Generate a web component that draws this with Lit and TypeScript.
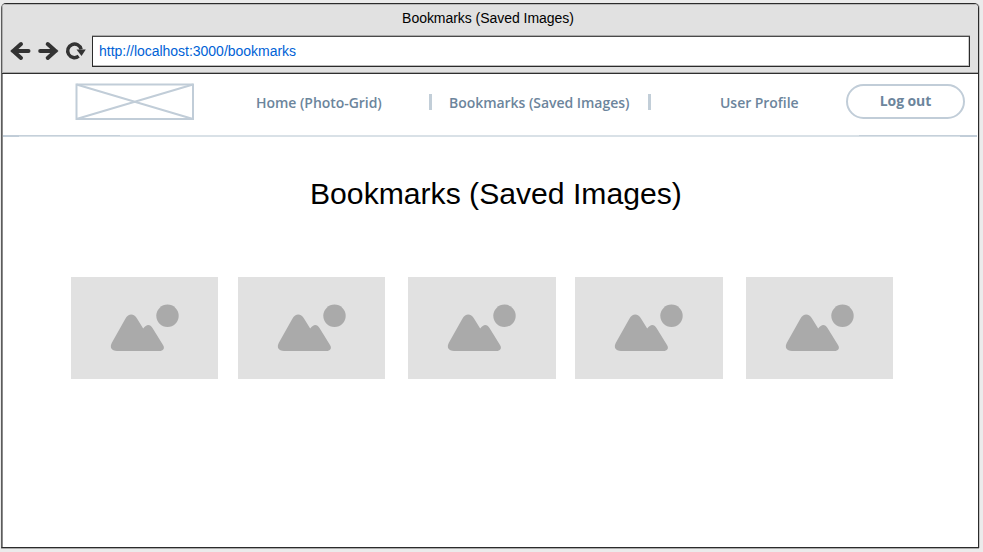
import { LitElement, html, css, svg } from "lit";
import { customElement } from "lit/decorators.js";

@customElement("photo-tile")
class PhotoTile extends LitElement {
  static styles = css`
    :host { display: block; width: 147.4px; height: 102px; background: #e1e1e1; }
    svg { display: block; }
  `;
  render() {
    return html`<svg width="147" height="102" viewBox="0 0 147 102" fill="#aaa">
      <circle cx="96.500" cy="38.800" r="11.200" />
      <path d="M46 74C40.500 74 38.300 70 41 65.500L54.500 41.500C57.500 36.300 63 36.300 66 41.500L72.200 51.500C75.500 46.800 79 46.800 81.500 51L92 68C94.300 71.500 92 74 88.500 74Z" />
    </svg>`;
  }
}

@customElement("app-root")
class AppRoot extends LitElement {
  static styles = css`
    :host { display: block; box-sizing: border-box; height: 552px; padding: 3px 4px 4px 1px; background: #ebebeb; font-family: "Liberation Sans", Arial, sans-serif; overflow: hidden; }
    * { box-sizing: border-box; }
    .window { height: 545px; border: 1px solid #2b2b2b; border-left-color: #5c5c5c; border-radius: 5px 5px 0 0; background: #fff; overflow: hidden; box-shadow: 0 1px 0 #aaa, 1px 0 0 #c4c4c4, inset 1px 0 0 #8c8c8c; }
    .chrome { height: 70px; background: #e1e1e1; border-bottom: 1px solid #2f2f2f; box-shadow: inset 0 1px 0 #b9b9b9, inset 1px 0 0 #b0b0b0, inset 0 -1px 0 #a8a8a8; }
    .title { height: 32px; padding-top: 6px; padding-right: 4px; font-size: 14px; line-height: 17px; letter-spacing: -0.04px; text-align: center; color: #000; }
    .bar { display: flex; height: 31px; padding-right: 8px; }
    .tools { width: 90px; flex: none; display: block; }
    .url { flex: 1; height: 31px; border: 1px solid #2b2b2b; border-top-color: #4a4a4a; background: #fff; box-shadow: inset 0 -1px 0 #bbb, inset -1px 0 0 #ccc, 0 -1px 0 #aaa; padding: 6px 0 0 6px; font-size: 14px; line-height: 17px; letter-spacing: -0.02px; color: #0062d6; }
    .nav { display: flex; height: 60px; color: #6c859c; font: 600 14px/20px "Open Sans", sans-serif; letter-spacing: -0.04px; }
    .logo { margin: 9px 0 0 73px; flex: none; display: block; }
    .link { margin-top: 19px; white-space: nowrap; flex: none; }
    .home { width: 173px; margin-left: 62px; }
    .saved { width: 200px; margin-left: 17px; }
    .profile { width: 126px; margin-left: 69px; }
    .sep { width: 3px; height: 16px; margin-top: 20px; background: #c2ced8; flex: none; }
    .saved + .sep { margin-left: -1px; }
    .logout { width: 119px; height: 35px; margin-top: 10px; flex: none; border: 2px solid #c1cdd8; border-radius: 18px; padding-top: 5px; text-align: center; font-weight: 700; letter-spacing: -0.1px; }
    .rule { display: block; }
    h1 { margin: 39px 0 0 308px; font-weight: 400; font-size: 30.150px; line-height: 36px; color: #000; white-space: nowrap; }
    .grid { display: grid; grid-template-columns: 167px 170.300px 167px 170.700px 147px; margin: 65px 0 0 69px; }
  `;
  render() {
    const arrow = svg`<path d="M3.500 9.500H19M11.500 2.500L3.700 9.500L11.500 16.500" fill="none" stroke="#333" stroke-width="4" stroke-linecap="round" stroke-linejoin="miter" />`;
    return html`<div class="window">
      <div class="chrome">
        <div class="title">Bookmarks (Saved Images)</div>
        <div class="bar">
          <svg class="tools" width="90" height="31" viewBox="2 36 90 31">
            <g transform="translate(9.500 41.500)">${arrow}</g>
            <g transform="translate(59.200 41.500) scale(-1 1)">${arrow}</g>
            <path d="M78.700 56.200A6.800 6.800 0 1 1 81.100 49.300" fill="none" stroke="#333" stroke-width="3.400" />
            <path d="M76.500 49.500H85.800L81.500 56Z" fill="#333" />
          </svg>
          <div class="url">http://localhost:3000/bookmarks</div>
        </div>
      </div>
      <nav class="nav">
        <svg class="logo" width="119" height="38" viewBox="0 0 119 38" fill="none" stroke="#c1cdd8" stroke-width="2">
          <rect x="1.500" y="1.500" width="116.500" height="34.500" />
          <path d="M1.500 1.500L118 36M118 1.500L1.500 36" />
        </svg>
        <div class="link home">Home (Photo-Grid)</div>
        <div class="sep"></div>
        <div class="link saved">Bookmarks (Saved Images)</div>
        <div class="sep"></div>
        <div class="link profile">User Profile</div>
        <div class="logout">Log out</div>
      </nav>
      <svg class="rule" width="976" height="3" viewBox="2 134 976 3">
        <path d="M3 136H977" stroke="#d9e1e7" stroke-width="2" />
        <path d="M3 135.500H120M859 135.500H977" stroke="#c5d0da" stroke-width="1" />
        <path d="M3 136H19M960 136H977" stroke="#c1cdd8" stroke-width="2" />
      </svg>
      <h1>Bookmarks (Saved Images)</h1>
      <div class="grid">${[0, 1, 2, 3, 4].map(() => html`<photo-tile></photo-tile>`)}</div>
    </div>`;
  }
}
